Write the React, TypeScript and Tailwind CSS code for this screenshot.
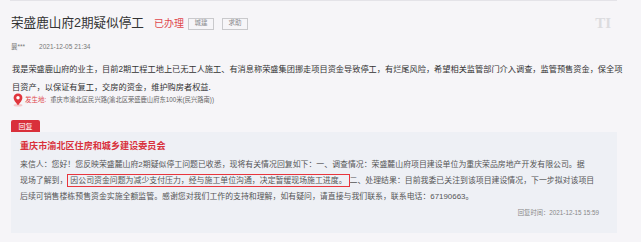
import React from "react";

const Pin = () => (
  <svg width="12" height="14" viewBox="0 0 12 14">
    <ellipse cx="6" cy="12.3" rx="4.5" ry="1.3" fill="#f3c9cb" />
    <path
      d="M6 0.6C3.4 0.6 1.6 2.5 1.6 4.9 1.6 7.7 6 12 6 12s4.4-4.3 4.4-7.1C10.4 2.5 8.6 0.6 6 0.6z"
      fill="#e0353d"
    />
    <circle cx="6" cy="4.8" r="1.7" fill="#ffffff" />
  </svg>
);

const Tag = ({ label }: { label: string }) => (
  <span className="flex h-[12px] w-[26px] items-center justify-center border border-[#c9c9cc] text-[6.5px] leading-none text-[#8a8a8e]">
    {label}
  </span>
);

const App = () => {
  return (
    <div
      className="h-[242px] w-[641px] overflow-hidden bg-[#f6f5f8]"
      style={{ fontFamily: '"Liberation Sans", "Noto Sans CJK SC", sans-serif' }}
    >
      <div className="ml-[10px] w-[607px] border-t border-[#e4e3e8]">
        {/* Title */}
        <div className="mt-[16px] flex h-[13px] items-center pl-[1px]">
          <h1 className="text-[12.6px] leading-none text-[#333]">荣盛鹿山府2期疑似停工</h1>
          <span className="ml-[10px] text-[10px] leading-none text-[#e0474d]">已办理</span>
          <div className="ml-[4px] flex gap-[8px]">
            <Tag label="城建" />
            <Tag label="求助" />
          </div>
          <span
            className="ml-auto mr-[6px] text-[15px] font-bold leading-none text-[#dcdcdf]"
            style={{ fontFamily: '"Liberation Serif", serif' }}
          >
            TI
          </span>
        </div>

        {/* Author */}
        <div className="mt-[13px] flex h-[8px] items-center pl-[1px] text-[6.5px] leading-none text-[#777]">
          <span>曩***</span>
          <span className="ml-[14px]">2021-12-05 21:34</span>
        </div>

        {/* Content */}
        <div className="mt-[10px] whitespace-nowrap pl-[2px] text-[8.2px] leading-[17.5px] text-[#333]">
          <p>我是荣盛鹿山府的业主，目前2期工程工地上已无工人施工、有消息称荣盛集团挪走项目资金导致停工，有烂尾风险，希望相关监管部门介入调查，监管预售资金，保全项</p>
          <p>目资产，以保证有复工，交房的资金，维护购房者权益.</p>
        </div>

        {/* Location */}
        <div className="mt-[-3px] flex items-center pl-[2px]">
          <Pin />
          <span className="ml-[1px] text-[6.5px] leading-none text-[#e0474d]">发生地:</span>
          <span className="ml-[4px] text-[6.3px] leading-none text-[#666]">
            重庆市渝北区民兴路(渝北区荣盛鹿山府东100米(民兴路南))
          </span>
        </div>

        {/* Reply */}
        <div className="mt-[13px] ml-[1px] flex h-[12px] w-[29px] items-center justify-center rounded-t-[2px] bg-[#d9303b] text-[7px] leading-none text-white">
          回复
        </div>
        <div className="ml-[1px] h-[101px] bg-[#eef0f5] pl-[9px] pr-[10px] pt-[9px]">
          <h2 className="text-[9.1px] font-bold leading-[10px] text-[#d9303b]">
            重庆市渝北区住房和城乡建设委员会
          </h2>
          <div className="mt-[6px] whitespace-nowrap text-[7.9px] leading-[16px] text-[#555]">
            <p>来信人：您好！您反映荣盛麓山府2期疑似停工问题已收悉，现将有关情况回复如下：一、调查情况：荣盛麓山府项目建设单位为重庆荣品房地产开发有限公司。据</p>
            <p>
              现场了解到，
              <span className="border border-[#e8353d] px-[2px] py-[1px]">
                因公司资金问题为减少支付压力，经与施工单位沟通，决定暂缓现场施工进度。
              </span>
              二、处理结果：目前我委已关注到该项目建设情况，下一步拟对该项目
            </p>
            <p>后续可销售楼栋预售资金实施全额监管。感谢您对我们工作的支持和理解，如有疑问，请直接与我们联系，联系电话：67190663。</p>
          </div>
          <div className="mt-[5px] pr-[8px] text-right text-[6.3px] leading-none text-[#888]">
            回复时间：2021-12-15 15:59
          </div>
        </div>
      </div>
    </div>
  );
};

export default App;
